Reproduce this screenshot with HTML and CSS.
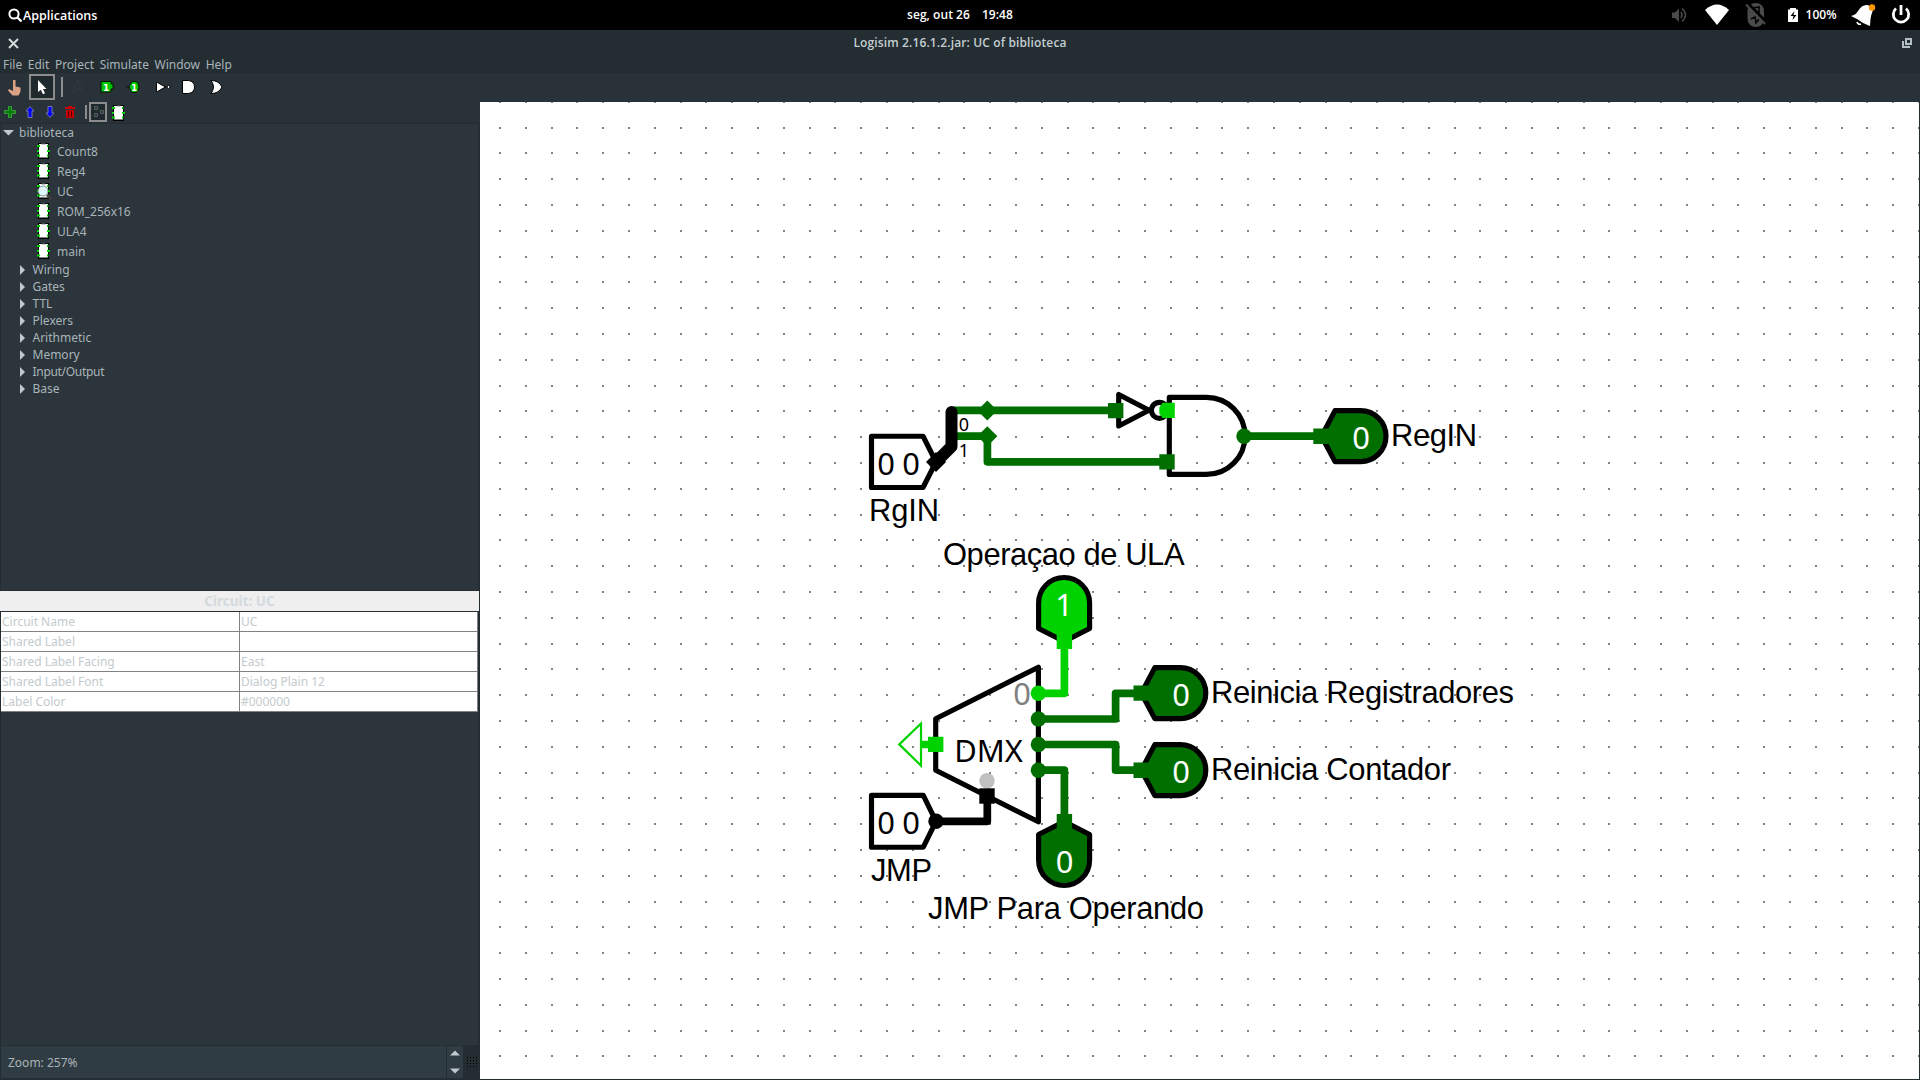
FILE: index.html
```html
<!DOCTYPE html>
<html lang="pt">
<head>
<meta charset="utf-8">
<title>Logisim 2.16.1.2.jar: UC of biblioteca</title>
<link rel="stylesheet" href="styles.css">
</head>
<body>
<svg width="0" height="0" class="defs">
  <defs>
    <symbol id="chip" viewBox="0 0 13 16">
      <rect x="1" y="0" width="11" height="16" fill="#000"/>
      <rect x="2" y="1" width="9" height="13.5" fill="#fff"/>
      <path d="M4.5 .5h4v1h-4z" fill="#888"/>
      <path d="M0 3h3M0 8h2M0 12.500h3M10 3h1.500M10 8h3M10 12.500h1.500" stroke="#00d200" stroke-width="2"/>
    </symbol>
  </defs>
</svg>
<header class="topbar">
  <div class="apps">
    <svg width="15" height="15" viewBox="0 0 15 15"><circle cx="6" cy="6" r="4.600" fill="none" stroke="#fff" stroke-width="2"/><path d="M9.500 9.500l4 4" stroke="#fff" stroke-width="2.400"/></svg>
    <span>Applications</span>
  </div>
  <div class="clock"><span>seg, out 26</span><span>19:48</span></div>
  <svg class="tray" width="250" height="30" viewBox="1665 0 250 30">
    <path d="M1672 12.500h3l4-4v13.500l-4-4h-3z" fill="#4a4a4a"/>
    <path d="M1681 12q2 3 0 6M1682 8.500q7 6.500 0 13" fill="none" stroke="#4a4a4a" stroke-width="1.500"/>
    <path d="M1705 10q12-11 24 0l-12 15z" fill="#fff"/>
    <rect x="1747.500" y="3" width="16.500" height="24" rx="8" fill="#4a4a4a"/>
    <path d="M1751 19l4-2 1 6 3-4M1753 8l6-1v6l-5-4" stroke="#000" stroke-width="1.500" fill="none"/>
    <path d="M1747 3.500l20 20" stroke="#000" stroke-width="4"/>
    <path d="M1746 4.500l19 19.500" stroke="#4a4a4a" stroke-width="2"/>
    <path d="M1788 9.500h2v-1.500h6v1.500h2v12.500h-10z" fill="#fff"/>
    <path d="M1794.500 11l-4 5h3l-1 4 4-5h-3z" fill="#000"/>
    <text x="1805.500" y="19" textLength="31" class="battery">100%</text>
    <path d="M1851 16q5-1 7-5 4-7 10-6l5 5q-2 5-2.500 9l-.5 7-7-3-6-4z" fill="#fff"/>
    <path d="M1857 22q1 3 4 2" stroke="#fff" stroke-width="1.600" fill="none"/>
    <circle cx="1872" cy="7.500" r="3.200" fill="#ff9800"/>
    <path d="M1896 8.500a7.700 7.700 0 1 0 10 0" fill="none" stroke="#fff" stroke-width="2.800"/><path d="M1901 5v10" stroke="#fff" stroke-width="2.800"/>
  </svg>
</header>
<div class="titlebar">
  <svg width="11" height="11" viewBox="0 0 11 11"><path d="M1 1l9 9M10 1l-9 9" stroke="#d3dadd" stroke-width="2"/></svg>
  <h1>Logisim 2.16.1.2.jar: UC of biblioteca</h1>
  <svg width="10" height="10" viewBox="0 0 10 10"><path d="M4 1h5v5h-5z" fill="none" stroke="#b4bfc4" stroke-width="2"/><path d="M1 3v6h6v-1" fill="none" stroke="#b4bfc4" stroke-width="2"/></svg>
</div>
<nav class="menubar"><span>File</span><span>Edit</span><span>Project</span><span>Simulate</span><span>Window</span><span>Help</span></nav>
<div class="toolbar">
  <svg width="240" height="29" viewBox="0 73 240 29">
    <path d="M13 80h2.500v6.500l5 1v4l-2 4h-6l-4.500-5 1-1.500 4 2z" fill="#dba184"/>
    <rect x="30" y="75" width="24" height="24" fill="#202a2e" stroke="#8c8c8c" stroke-width="2"/>
    <path d="M38 80v12l2.800-2.300 2.200 4.600 2-1-2-4.300h3.500z" fill="#fff"/>
    <path d="M62 77v20" stroke="#8c8c8c" stroke-width="2"/>
    <text x="71.500" y="93.500" class="letter">A</text>
    <path d="M101 81.500h10v2.500h2v5h-2v3h-10z" fill="#00c800" stroke="#001800"/>
    <path d="M126 87h3l3-5.500h4q3 2 3 5.500t-3 5.500h-4l-3-5.500" fill="#00c800" stroke="#001800"/>
    <text x="103" y="91" class="bit">1</text><text x="131" y="91" class="bit">1</text>
    <path d="M156.500 82l9 5-9 5z" fill="#fff" stroke="#000"/><circle cx="168.500" cy="87" r="1.500" fill="#fff" stroke="#000"/>
    <path d="M182.500 80.500h6q6 1 6 6.500t-6 6.500h-6z" fill="#fff" stroke="#000"/>
    <path d="M211 80.500q8 0 11 6.500-3 6.500-11 6.500 5-6.500 0-13z" fill="#fff" stroke="#000"/>
  </svg>
</div>
<main class="workspace">
  <aside class="side">
    <div class="subtoolbar">
      <svg width="130" height="21" viewBox="0 102 130 21">
        <path d="M8.500 106.500h3v4h4v3h-4v4h-3v-4h-4v-3h4z" fill="#008000" stroke="#3d9a3d"/>
        <path d="M30 106.500l4 4.500h-2v6.500h-4v-6.500h-2z" fill="#00f" stroke="#7076ac"/>
        <path d="M50 117.500l4-4.500h-2v-6.500h-4v6.500h-2z" fill="#00f" stroke="#7076ac"/>
        <path d="M65 107h10v2h-10zM68 106h4v1h-4zM66 110h8v8h-8z" fill="#c80000"/><path d="M68.500 111v6M71.500 111v6" stroke="#500"/>
        <path d="M86 105v14" stroke="#8c8c8c" stroke-width="2"/>
        <rect x="90" y="103" width="16" height="18" fill="#202a2e" stroke="#8c8c8c" stroke-width="2"/>
        <path d="M94.500 106.500h3v3h-3zM94.500 113.500h3v3h-3zM100.500 110.500h3v3h-3z" fill="#30383c" stroke="#565d60"/><path d="M91 107h2M91 116h2M98 108h1v3" stroke="#154d1c" fill="none"/>
      </svg>
      <svg class="chip-view" width="13" height="16"><use href="#chip"/></svg>
    </div>
    <ul class="tree">
      <li class="root"><svg width="11" height="6"><path d="M0 0h11l-5.500 5.500z" fill="#c0c8cc"/></svg>biblioteca</li>
      <li class="circuit"><svg width="13" height="16"><use href="#chip"/></svg>Count8</li>
      <li class="circuit"><svg width="13" height="16"><use href="#chip"/></svg>Reg4</li>
      <li class="circuit"><svg width="13" height="16"><use href="#chip"/><circle cx="6" cy="8" r="5" fill="#dff8fc" stroke="#5c6668" stroke-width=".7"/><path d="M10 12l4 4" stroke="#443f3d" stroke-width="2.500"/></svg>UC</li>
      <li class="circuit"><svg width="13" height="16"><use href="#chip"/></svg>ROM_256x16</li>
      <li class="circuit"><svg width="13" height="16"><use href="#chip"/></svg>ULA4</li>
      <li class="circuit"><svg width="13" height="16"><use href="#chip"/></svg>main</li>
      <li class="lib">Wiring</li><li class="lib">Gates</li><li class="lib">TTL</li><li class="lib">Plexers</li><li class="lib">Arithmetic</li><li class="lib">Memory</li><li class="lib tight">Input/Output</li><li class="lib">Base</li>
    </ul>
    <h2 class="attr-title">Circuit: UC</h2>
    <dl class="attrs">
      <dt>Circuit Name</dt><dd>UC</dd>
      <dt>Shared Label</dt><dd></dd>
      <dt>Shared Label Facing</dt><dd>East</dd>
      <dt>Shared Label Font</dt><dd>Dialog Plain 12</dd>
      <dt>Label Color</dt><dd>#000000</dd>
    </dl>
    <div class="attr-rest"></div>
    <div class="zoombar">
      <div class="zoomfield">Zoom: 257%</div>
      <svg class="spin" width="16" height="32"><path d="M3 9.500l5-5 5 5zM3 22.500h10l-5 5z" fill="#c0c8cc"/></svg>
      <div class="gridbtn"></div>
    </div>
  </aside>
  <svg class="canvas" width="1439" height="977" viewBox="480 102 1439 977">
    <g id="grid" fill="#828282" shape-rendering="crispEdges"></g>
    <g class="outline">
      <path d="M871.500 436.200H923L936 462 923 487.500H871.500z" fill="#fff"/>
      <path d="M1118.700 394.500V426L1149 410.300z"/>
      <circle cx="1159.400" cy="410.300" r="8"/>
      <path d="M1169.300 397.400H1206.500A38.500 38.500 0 0 1 1206.500 474.400H1169.300z"/>
      <path d="M935.700 718.700L1038.400 667.200V821.800L935.700 770.300z"/>
      <path d="M871.500 795.400H923.300L936 821.300 923.300 847.200H871.500z" fill="#fff"/>
    </g>
    <g class="outline low">
      <path d="M1321.500 436.200L1335 410.600H1360.500A25.500 25.500 0 0 1 1360.500 461.600H1335z"/>
      <path d="M1141.300 693.200L1154.800 667.600H1180.300A25.500 25.500 0 0 1 1180.300 718.600H1154.800z"/>
      <path d="M1141.300 770.200L1154.800 744.600H1180.300A25.500 25.500 0 0 1 1180.300 795.600H1154.800z"/>
      <path d="M1064.200 821.500L1038.600 834.500V860A25.500 25.500 0 0 0 1089.600 860V834.500z"/>
    </g>
    <path class="outline high" d="M1064.200 641.500L1038.600 628.500V603A25.500 25.500 0 0 1 1089.600 603V628.500z"/>
    <g class="wire dark">
      <path d="M953 410.400H1115M953 436.200H987.400V461.800H1167M1244 436.200H1321"/>
      <path d="M1038.400 719H1115.600V693.300H1141M1038.400 744.500H1115.600V770.200H1141M1038.400 770.200H1064.400V821.500"/>
    </g>
    <path class="wire bright" d="M1038.400 693.300H1064.400V641.500M921 744.500H936"/>
    <path class="wire" d="M936 821.300H987.300V796" stroke="#000"/>
    <path class="bus" d="M951.500 412V446.500L935 463"/>
    <path d="M926 462l10-10 10 10-10 10z"/>
    <g class="low-fill">
      <path d="M977.300 410.400l10-10 10 10-10 10zM977.300 436.200l10-10 10 10-10 10z"/>
      <path d="M1108 403h15.400v15.300h-15.400zM1159.300 454.200h15.400v15.400h-15.400zM1313.300 428.600h15.400v15.400h-15.400zM1133.500 685.500h15.400v15.300h-15.400zM1133.500 762.600h15.400v15.300h-15.400zM1056.700 814h15.400v15.300h-15.400z"/>
      <circle cx="1244" cy="436.200" r="7.700"/><circle cx="1038.400" cy="719" r="7.700"/><circle cx="1038.400" cy="744.500" r="7.700"/><circle cx="1038.400" cy="770.300" r="7.700"/>
    </g>
    <g class="high-fill">
      <path d="M1162.500 402.800H1174.800V418H1162.500L1159.300 413.500V407.500z"/>
      <path d="M1056.700 633.700h15.400v15.300h-15.400zM928 736.800h15.400v15.300h-15.400z"/>
      <circle cx="1038.400" cy="693.300" r="7.700"/>
    </g>
    <path d="M899.300 744.400L921 723.500V765.600z" fill="none" stroke="#00d200" stroke-width="2.200"/>
    <circle cx="987" cy="780.700" r="7.700" fill="#c0c0c0"/>
    <path d="M979.300 788.300h15.400v15.400h-15.400z"/>
    <circle cx="936" cy="821.300" r="7.700"/>
    <g class="value">
      <text x="886" y="474.700">0</text><text x="911" y="474.700">0</text>
      <text x="886" y="833.500">0</text><text x="911" y="833.500">0</text>
      <text x="1022" y="705" fill="#808080">0</text>
      <text x="988.500" y="762">DMX</text>
      <g fill="#fff">
        <text x="1361" y="448.500">0</text><text x="1064" y="616">1</text><text x="1181" y="705.500">0</text><text x="1181" y="782.500">0</text><text x="1064.700" y="872.500">0</text>
      </g>
    </g>
    <g class="bitnum"><text x="964" y="430.700">0</text><text x="964" y="457">1</text></g>
    <g class="label">
      <text x="869" y="520.700" textLength="70">RgIN</text>
      <text x="1391" y="446" textLength="86">RegIN</text>
      <text x="943" y="565" textLength="241.500">Operaçao de ULA</text>
      <text x="1211" y="703" textLength="303">Reinicia Registradores</text>
      <text x="1211" y="780" textLength="240">Reinicia Contador</text>
      <text x="871" y="881" textLength="61">JMP</text>
      <text x="928" y="919" textLength="276">JMP Para Operando</text>
    </g>
  </svg>
</main>
<script src="grid.js"></script>
</body>
</html>
```
FILE: styles.css
```css
* { box-sizing: border-box; }
body { margin: 0; width: 1920px; height: 1080px; overflow: hidden; display: flex; flex-direction: column; background: #232d32; color: #a9b4b9; font: 12px/17px "Noto Sans", "Open Sans", sans-serif; }
svg { display: block; flex: none; }
.defs { position: absolute; }
h1, h2, ul, dl, dd { margin: 0; padding: 0; }

.topbar { height: 30px; flex: none; background: #000; color: #fff; display: grid; grid-template-columns: 1fr auto 1fr; align-items: center; font-family: "Open Sans", sans-serif; font-weight: 600; padding: 0 5px 0 8px; }
.apps { display: flex; align-items: center; }
.apps span { font-size: 12.500px; }
.clock { display: flex; gap: 12px; margin: 0 3px 2px 0; letter-spacing: .05px; }
.tray { justify-self: end; }
.battery { font: 600 12px "Open Sans", sans-serif; fill: #fff; }

.titlebar { height: 26px; flex: none; display: grid; grid-template-columns: 1fr auto 1fr; align-items: center; padding: 0 8px; }
.titlebar h1 { font: 600 12px/17px "Open Sans", sans-serif; letter-spacing: .13px; color: #c3cdd1; padding-bottom: 2px; }
.titlebar svg:last-child { justify-self: end; }
.menubar { height: 17px; flex: none; display: flex; gap: 5.600px; padding-left: 3px; }
.toolbar { height: 29px; flex: none; background: #283238; }
.letter { font: 20px "Open Sans", sans-serif; fill: #30383b; }
.bit { font: 700 9px "DejaVu Sans", sans-serif; fill: #fff; }

.workspace { flex: 1; display: flex; min-height: 0; padding-bottom: 1px; }
.side { width: 480px; flex: none; display: flex; flex-direction: column; background: #232d32; }
.subtoolbar { height: 21px; flex: none; background: #283238; display: flex; align-items: center; }
.chip-view { margin-left: -18px; }
.tree { list-style: none; height: 467px; flex: none; background: #2b353b; border-left: 1px solid #232d32; margin-right: 2px; border-top: 1px solid #232d32; }
.tree li { display: flex; align-items: center; }
.root { height: 17px; gap: 5px; padding-left: 2px; }
.circuit { height: 20px; padding-left: 36px; gap: 7px; }
.circuit svg { overflow: visible; }
.lib { height: 17px; padding-left: 18.500px; gap: 8px; }
.lib.tight { letter-spacing: -.3px; }
.lib::before { content: ""; border-left: 5px solid #c0c8cc; border-top: 5px solid transparent; border-bottom: 5px solid transparent; }
.attr-title { height: 22px; margin-right: 1px; flex: none; background: #efefef; border: solid #232d32; border-width: 1px 0; color: #d3dadd; font: 700 13.500px/20px "Noto Sans", sans-serif; text-align: center; }
.attrs { display: grid; grid-template-columns: 239px 238px; grid-auto-rows: 20px; margin-left: 1px; width: 477px; flex: none; }
.attrs dt, .attrs dd { background: #fff; color: #c3cbce; border: solid #828282; border-width: 0 1px 1px 0; padding-left: 1px; line-height: 19px; }
.attr-rest { flex: 1; margin: 0 2px 1px 1px; background: #2b353b; }
.zoombar { height: 33px; flex: none; display: flex; gap: 1px; padding: 0 0 1px 1px; }
.zoomfield { width: 445px; background: #303c43; padding-left: 7px; line-height: 33px; }
.spin { background: #303c43; }
.gridbtn { width: 12px; height: 12px; margin: 10px 0 0 2px; background: radial-gradient(circle at 50% 50%, #000 .7px, transparent .9px) 0 0 / 3px 3px; }

.canvas { background: #fff; }
.outline { fill: none; stroke: #000; stroke-width: 5.150; stroke-linejoin: round; }
.outline.low { fill: #006f00; }
.outline.high { fill: #00d200; }
.wire { fill: none; stroke-width: 7.700; stroke-linejoin: round; }
.dark { stroke: #006f00; }
.bright { stroke: #00d200; }
.low-fill { fill: #006f00; }
.high-fill { fill: #00d200; }
.bus { fill: none; stroke: #000; stroke-width: 12; stroke-linecap: round; stroke-linejoin: round; }
.value { font: 30.900px "Noto Sans", "Open Sans", sans-serif; text-anchor: middle; }
.bitnum { font: 18px "Noto Sans", "Open Sans", sans-serif; text-anchor: middle; }
.label { font: 30.900px "Liberation Sans", Arial, sans-serif; }
```
FILE: grid.js
```js
// Grid dots sit on every tenth world unit, snapped to whole pixels.
const grid = document.getElementById('grid');
const step = 25.8;
let d = '';
for (let j = 0; j < 38; j++) {
  for (let i = 0; i < 56; i++) {
    d += `M${Math.floor(499.5 + step * i)} ${Math.floor(101.3 + step * j)}h2v2h-2z`;
  }
}
const path = document.createElementNS('http://www.w3.org/2000/svg', 'path');
path.setAttribute('d', d);
grid.appendChild(path);
```
